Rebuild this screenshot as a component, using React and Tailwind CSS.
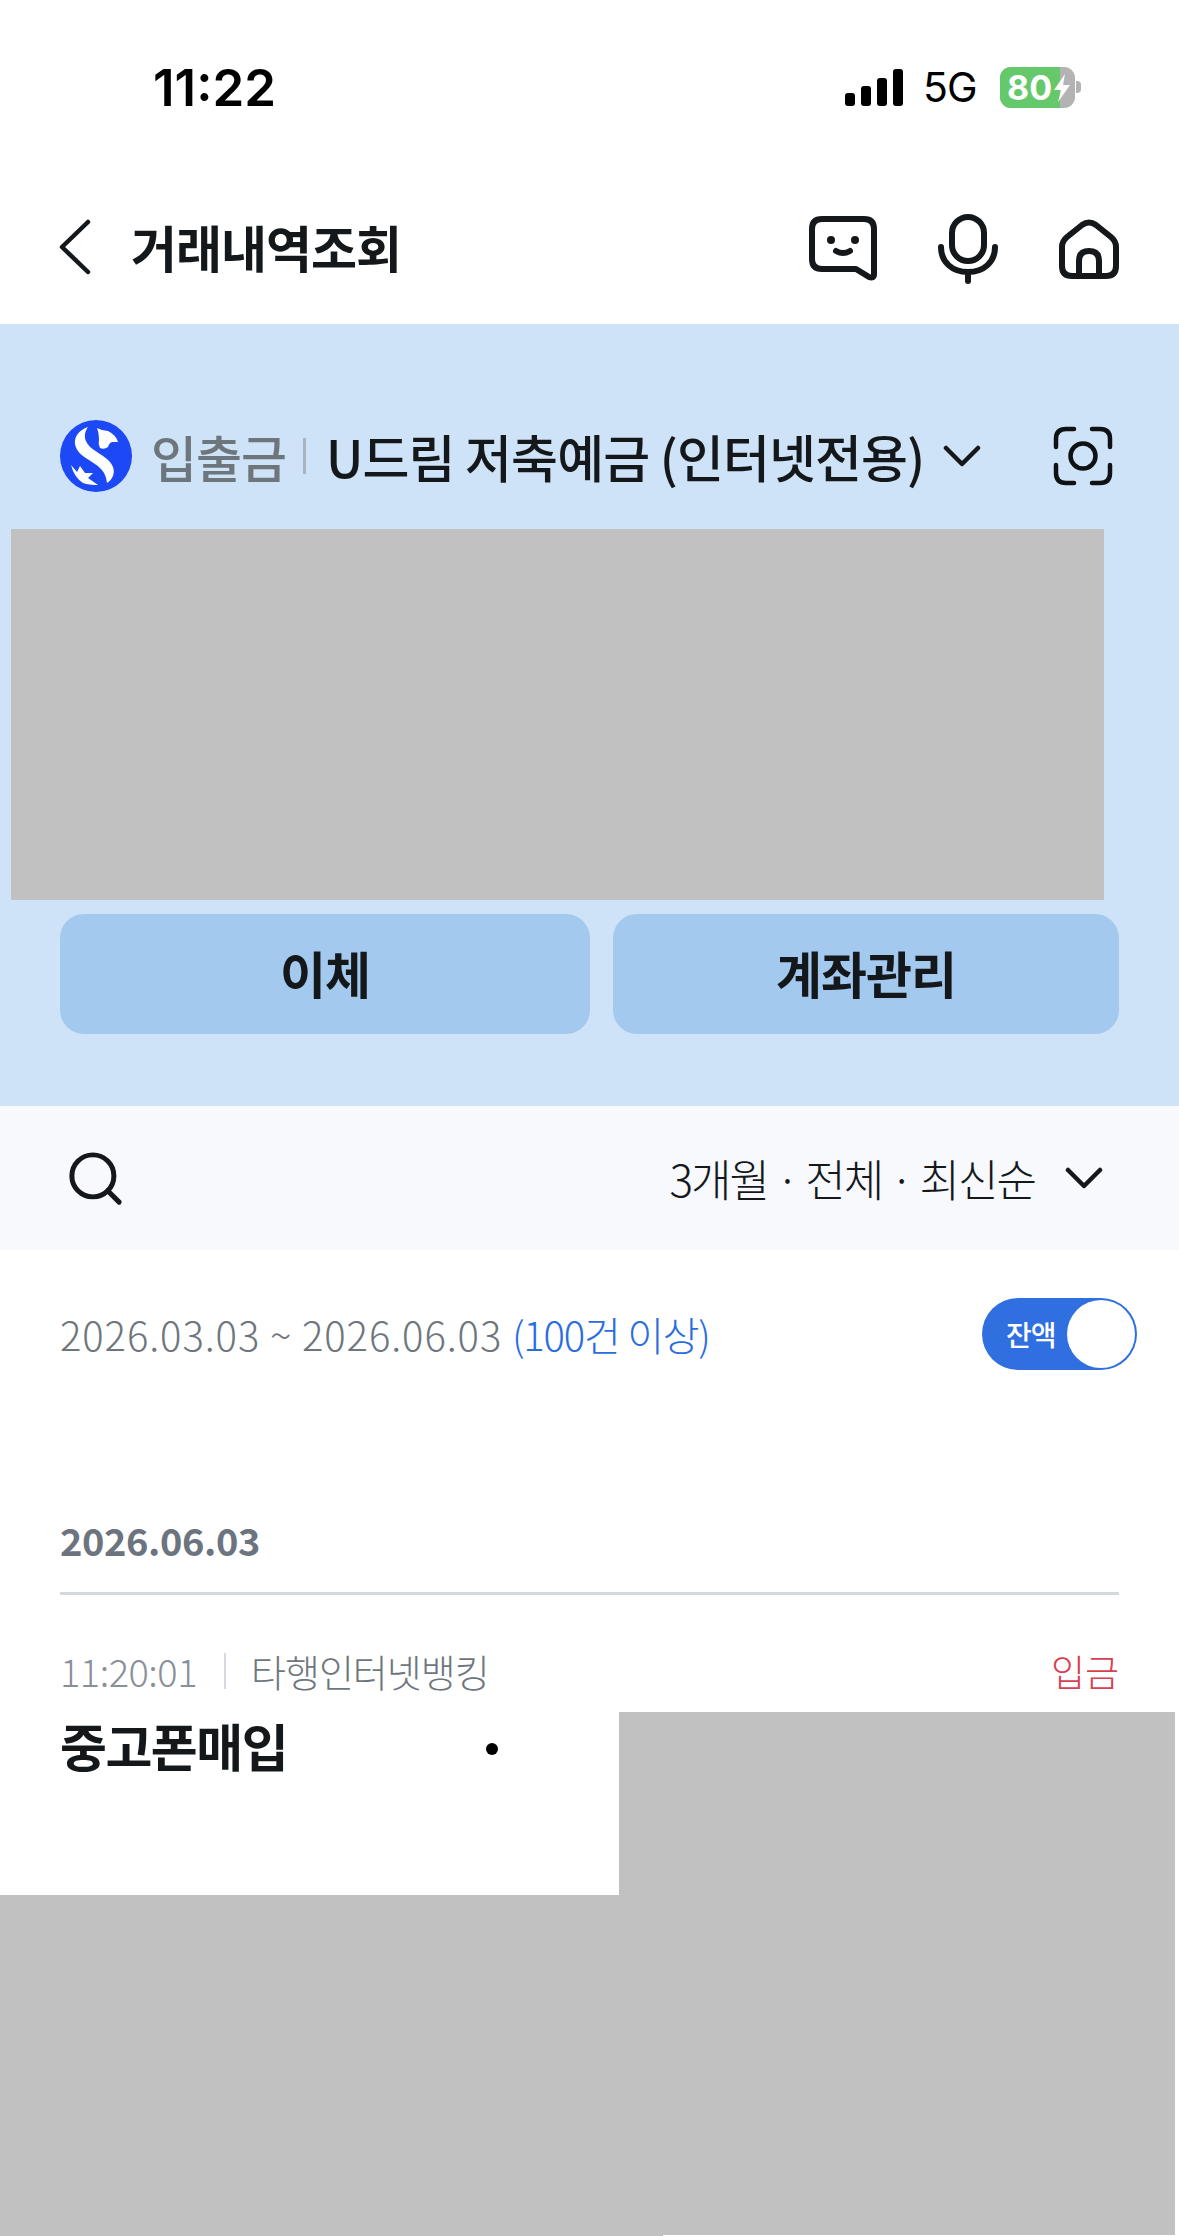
import React from 'react';
import { Search } from 'lucide-react';

const KR = "font-['Noto_Sans_CJK_KR','Noto_Sans',sans-serif]";

function ShinhanLogo() {
    return (
        <svg width="72" height="72" viewBox="0 0 72 72">
            <circle cx="36" cy="36" r="36" fill="#1c49f5" />
            <path d="M28 7 C19 10 14 17 15 24 C16 32 24 37 32 42 C40 47 46 52 47 63 C53 59 55 53 53 47 C50 39 41 35 34 30 C27 25 21 17 28 7 Z" fill="#fff" />
            <path d="M37 8 L42 10 L48 11 Q56 15 58 22 L52 22 Q49 23 48 27 Q44 30 40 28 Q38 24 39 19 Q39 13 37 8 Z" fill="#fff" />
            <path d="M11 45 L17 52 L20 46 L25 53 L33 53 L28 58 L38 65 Q29 65 23 63 Q14 57 11 45 Z" fill="#fff" />
        </svg>
    );
}

function BackIcon() {
    return (
        <svg width="34" height="60" viewBox="0 0 34 60" fill="none" stroke="#14181b" strokeWidth="4.5" strokeLinecap="round" strokeLinejoin="round">
            <path d="M30 5 L4 30 L30 55" />
        </svg>
    );
}

function ChatIcon() {
    return (
        <svg width="68" height="66" viewBox="0 0 68 66" fill="none" stroke="#14181b" strokeWidth="6" strokeLinecap="round" strokeLinejoin="round">
            <path d="M13 3 H55 Q65 3 65 13 V58 Q65 63 60 61 L47 53 H13 Q3 53 3 43 V13 Q3 3 13 3 Z" />
            <circle cx="22" cy="24" r="4" fill="#14181b" stroke="none" />
            <circle cx="46" cy="24" r="4" fill="#14181b" stroke="none" />
            <path d="M27 35 Q34 39 41 35" />
        </svg>
    );
}

function MicIcon() {
    return (
        <svg width="60" height="70" viewBox="0 0 60 70" fill="none" stroke="#14181b" strokeWidth="6" strokeLinecap="round">
            <rect x="14" y="3" width="32" height="44" rx="16" />
            <path d="M3 33 C3 48 14 58 30 58 C46 58 57 48 57 33" />
            <path d="M30 58 V67" />
        </svg>
    );
}

function HomeIcon() {
    return (
        <svg width="60" height="60" viewBox="0 0 60 60" fill="none" stroke="#14181b" strokeWidth="6" strokeLinejoin="round">
            <path d="M23 6 Q30 1 37 6 L52 18 Q57 22 57 28 V47 Q57 57 47 57 H13 Q3 57 3 47 V28 Q3 22 8 18 Z" />
            <path d="M20 57 V42 Q20 32 30 32 Q40 32 40 42 V57" />
        </svg>
    );
}

function CameraFrameIcon() {
    return (
        <svg width="60" height="60" viewBox="0 0 60 60" fill="none" stroke="#0f1214" strokeWidth="4.5" strokeLinecap="round">
            <path d="M21 3 H13 Q3 3 3 13 V21" />
            <path d="M39 3 H47 Q57 3 57 13 V21" />
            <path d="M3 39 V47 Q3 57 13 57 H21" />
            <path d="M57 39 V47 Q57 57 47 57 H39" />
            <circle cx="30" cy="30" r="12.5" />
        </svg>
    );
}

function Chevron({ className }) {
    return (
        <svg className={className} width="38" height="24" viewBox="0 0 38 24" fill="none" stroke="#14181b" strokeWidth="4.5" strokeLinecap="round" strokeLinejoin="round">
            <path d="M3 4 L19 20 L35 4" />
        </svg>
    );
}

function StatusBar() {
    return (
        <div className="h-[114px] pt-[59px] pl-[153px] pr-[98px] flex items-start justify-between font-['Inter',sans-serif]">
            <span className="text-[51px] leading-[57px] font-semibold text-black">11:22</span>
            <div className="flex items-center h-[42px] mt-[7px]">
                <div className="flex items-end gap-[6px] h-[37px] w-[58px]">
                    <span className="w-[10px] h-[13px] bg-black rounded-[3px]"></span>
                    <span className="w-[10px] h-[20px] bg-black rounded-[3px]"></span>
                    <span className="w-[10px] h-[28px] bg-black rounded-[3px]"></span>
                    <span className="w-[10px] h-[37px] bg-black rounded-[3px]"></span>
                </div>
                <span className="ml-[20px] w-[52px] text-[41px] leading-[42px] font-normal text-black tracking-[-1px]">5G</span>
                <div className="ml-[25px] relative flex items-center h-[41px]">
                    <div className="w-[75px] h-[41px] rounded-[11px] overflow-hidden flex bg-[#b3b3b3]">
                        <div className="w-[60px] bg-[#65c86a]"></div>
                    </div>
                    <span className="absolute left-[7px] top-0 text-[34px] leading-[41px] font-bold text-white">80</span>
                    <svg className="absolute left-[53px] top-[6px]" width="18" height="30" viewBox="0 0 18 30">
                        <path d="M12 1 L1 17 H8 L5 29 L17 12 H10 Z" fill="#fff" />
                    </svg>
                    <span className="w-[5px] h-[12px] ml-[1px] bg-[#b3b3b3] rounded-r-[4px]"></span>
                </div>
            </div>
        </div>
    );
}

export default function App() {
    return (
        <div className={`w-[1179px] h-[2236px] overflow-hidden bg-white ${KR}`}>
            <StatusBar />

            {/* header */}
            <div className="h-[210px] pt-[56px] pl-[58px] pr-[60px] flex items-center justify-between">
                <div className="flex items-center">
                    <BackIcon />
                    <h1 className="ml-[39px] mt-[-3px] text-[50px] leading-[64px] font-semibold text-[#14181b] tracking-[-1px]">거래내역조회</h1>
                </div>
                <div className="flex items-center gap-[61px] mt-[4px]">
                    <ChatIcon />
                    <MicIcon />
                    <HomeIcon />
                </div>
            </div>

            {/* account */}
            <div className="h-[782px] bg-[#cfe3f8] flex flex-col">
                <div className="h-[205px] pl-[60px] pr-[66px] pt-[96px] flex items-start justify-between">
                    <div className="flex items-center">
                        <ShinhanLogo />
                        <span className="ml-[19px] text-[50px] leading-[72px] font-medium text-[#6e767d] tracking-[-1px]">입출금</span>
                        <span className="ml-[17px] w-[3px] h-[36px] bg-[#a8b4bf]"></span>
                        <span className="ml-[20px] text-[51px] leading-[72px] font-medium text-[#14181b] tracking-[-0.9px]">U드림 저축예금 (인터넷전용)</span>
                        <Chevron className="ml-[19px]" />
                    </div>
                    <div className="mt-[6px]">
                        <CameraFrameIcon />
                    </div>
                </div>
                <div className="ml-[11px] w-[1093px] h-[371px] bg-[#c1c1c1]"></div>
                <div className="mt-[14px] pl-[60px] pr-[60px] flex gap-[23px]">
                    <button className="w-[530px] h-[120px] pb-[3px] rounded-[24px] bg-[#a3c9ee] text-[50px] font-bold text-[#14181b] tracking-[-1px]">이체</button>
                    <button className="w-[506px] h-[120px] pb-[3px] rounded-[24px] bg-[#a3c9ee] text-[50px] font-bold text-[#14181b] tracking-[-1px]">계좌관리</button>
                </div>
            </div>

            {/* filter */}
            <div className="h-[144px] bg-[#f7f9fd] pl-[64px] pr-[76px] flex items-center justify-between">
                <Search size={63} strokeWidth={1.9} color="#14181b" />
                <div className="flex items-center">
                    <span className="text-[44px] leading-[60px] font-light text-[#14181b] tracking-[-2px]">3개월 · 전체 · 최신순</span>
                    <Chevron className="ml-[30px]" />
                </div>
            </div>

            {/* period */}
            <div className="h-[168px] pl-[60px] pr-[42px] flex items-center justify-between">
                <span className="text-[40px] leading-[56px] font-light text-[#6e767d] tracking-[0.9px]">
                    2026.03.03 ~ 2026.06.03 <span className="text-[#2a6de0] tracking-[-1.2px]">(100건 이상)</span>
                </span>
                <div className="w-[155px] h-[72px] rounded-full bg-[#2f6fe0] flex items-center justify-between pl-[24px] pr-[2px]">
                    <span className="text-[28px] font-medium text-white tracking-[-1px]">잔액</span>
                    <span className="w-[68px] h-[68px] rounded-full bg-white"></span>
                </div>
            </div>

            {/* date */}
            <div className="mx-[60px] h-[177px] flex flex-col justify-end border-b-[3px] border-[#d4d8df]">
                <span className="text-[38px] leading-[52px] font-bold text-[#6c7480] tracking-[-0.4px] mb-[26px]">2026.06.03</span>
            </div>

            {/* transaction */}
            <div className="h-[300px] flex flex-col">
                <div className="h-[117px] pl-[60px] pr-[60px] pt-[51px] flex items-start justify-between">
                    <div className="flex items-center h-[50px]">
                        <span className="text-[38px] leading-[50px] font-light text-[#8a9098] tracking-[-0.5px]">11:20:01</span>
                        <span className="ml-[27px] w-[2px] h-[36px] bg-[#d4d8df]"></span>
                        <span className="ml-[25px] text-[38px] leading-[50px] font-light text-[#6e767d] tracking-[-1px]">타행인터넷뱅킹</span>
                    </div>
                    <span className="text-[37px] leading-[50px] font-light text-[#d8404f]">입금</span>
                </div>
                <div className="flex-1 flex pr-[4px]">
                    <div className="w-[619px] pl-[60px] flex items-start">
                        <span className="text-[51px] leading-[70px] font-bold text-[#14181b] tracking-[-1.5px] mt-[-2px]">중고폰매입</span>
                        <span className="ml-[199px] mt-[31px] w-[12px] h-[12px] rounded-full bg-black"></span>
                    </div>
                    <div className="flex-1 bg-[#c1c1c1]"></div>
                </div>
            </div>

            {/* redacted */}
            <div className="h-[340px] mr-[4px] bg-[#c1c1c1]"></div>
            <div className="h-[1px] w-[663px] bg-[#c1c1c1]"></div>
        </div>
    );
}
